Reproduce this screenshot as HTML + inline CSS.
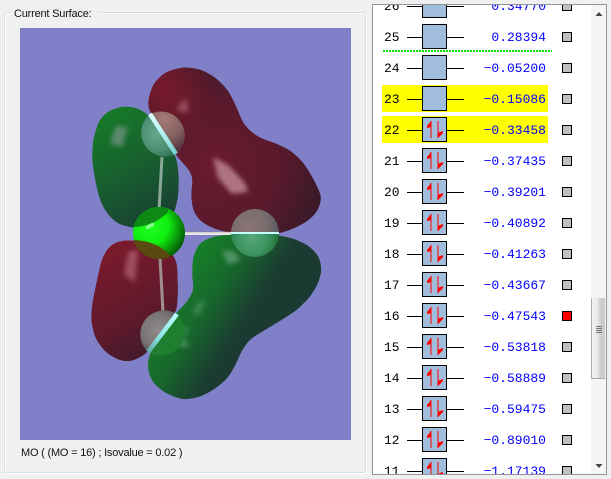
<!DOCTYPE html>
<html>
<head>
<meta charset="utf-8">
<style>
html,body{margin:0;padding:0;width:611px;height:479px;overflow:hidden;background:#f0f0f0}
svg{display:block}
.n{font:13px "Liberation Mono",monospace;fill:#000}
.e{font:13px "Liberation Mono",monospace;fill:#0000ff;text-anchor:end}
.l{font:11px "Liberation Sans",sans-serif;fill:#111;letter-spacing:-.2px}
</style>
</head>
<body>
<svg width="611" height="479" viewBox="0 0 611 479" xmlns="http://www.w3.org/2000/svg">
<defs>
<polygon id="pr1" points="148,100 153,84 165,72 183,67 200,69 215,77 228,90 236,106 243,123 250,131 260,138 275,143 290,150 303,162 313,178 322,197 318,211 308,221 293,229 277,234 255,236 230,233 212,228 200,221 193,211 191,195 193,177 187,167 178,158 160,130 148,108"/>
<polygon id="pg1" points="92,160 93,140 99,120 108,111 123,106 138,108 150,116 170,145 177,160 179,180 178,198 174,214 165,224 150,228 133,228 118,224 108,215 101,203 96,185"/>
<polygon id="pr2" points="123,240 110,245 102,258 97,280 92,305 91,320 95,338 105,352 118,360 130,362 145,355 160,335 177,310 178,290 177,262 170,250 150,242"/>
<polygon id="pg2" points="215,236 200,242 193,256 192,275 194,290 187,302 176,313 160,335 148,358 148,372 153,383 165,393 183,400 200,397 215,389 228,378 236,364 242,350 250,339 265,330 280,321 297,310 310,297 318,284 322,270 319,256 308,245 292,238 270,234 245,233"/>
<radialGradient id="red" gradientUnits="userSpaceOnUse" cx="215" cy="165" r="120">
<stop offset="0" stop-color="#6a1a2e"/><stop offset=".55" stop-color="#581a2c"/><stop offset="1" stop-color="#331a28"/>
</radialGradient>
<radialGradient id="redb" gradientUnits="userSpaceOnUse" cx="165" cy="88" r="50">
<stop offset="0" stop-color="#7c1a2c"/><stop offset="1" stop-color="#7c1a2c" stop-opacity="0"/>
</radialGradient>
<linearGradient id="red2" gradientUnits="userSpaceOnUse" x1="105" y1="250" x2="165" y2="355">
<stop offset="0" stop-color="#7a1a2c"/><stop offset=".6" stop-color="#5f1a2c"/><stop offset="1" stop-color="#3a1a2a"/>
</linearGradient>
<linearGradient id="gr1" gradientUnits="userSpaceOnUse" x1="105" y1="115" x2="170" y2="225">
<stop offset="0" stop-color="#167a28"/><stop offset=".55" stop-color="#185a30"/><stop offset="1" stop-color="#1a3a32"/>
</linearGradient>
<linearGradient id="gr2" gradientUnits="userSpaceOnUse" x1="185" y1="275" x2="255" y2="320">
<stop offset="0" stop-color="#167e28"/><stop offset=".45" stop-color="#17662c"/><stop offset=".9" stop-color="#1b3c32"/><stop offset="1" stop-color="#1b3a32"/>
</linearGradient>
<radialGradient id="cl" gradientUnits="userSpaceOnUse" cx="150" cy="226" r="36">
<stop offset="0" stop-color="#20ff20"/><stop offset=".5" stop-color="#10f010"/><stop offset=".8" stop-color="#0a9a0a"/><stop offset="1" stop-color="#066006"/>
</radialGradient>
<radialGradient id="h1g" gradientUnits="userSpaceOnUse" cx="157" cy="134" r="28">
<stop offset="0" stop-color="#64a88c"/><stop offset=".6" stop-color="#4c8e70"/><stop offset="1" stop-color="#2a6a4c"/>
</radialGradient>
<radialGradient id="h1r" gradientUnits="userSpaceOnUse" cx="164" cy="120" r="32">
<stop offset="0" stop-color="#a47a78"/><stop offset=".6" stop-color="#84605e"/><stop offset="1" stop-color="#583842"/>
</radialGradient>
<radialGradient id="h2g" gradientUnits="userSpaceOnUse" cx="252" cy="238" r="26">
<stop offset="0" stop-color="#56a878"/><stop offset=".6" stop-color="#3e9460"/><stop offset="1" stop-color="#23743c"/>
</radialGradient>
<radialGradient id="h2r" gradientUnits="userSpaceOnUse" cx="248" cy="226" r="32">
<stop offset="0" stop-color="#8a7674"/><stop offset=".6" stop-color="#786c6c"/><stop offset="1" stop-color="#565a62"/>
</radialGradient>
<radialGradient id="h3l" gradientUnits="userSpaceOnUse" cx="158" cy="330" r="28">
<stop offset="0" stop-color="#8e8a8a"/><stop offset=".6" stop-color="#787474"/><stop offset="1" stop-color="#4c4854"/>
</radialGradient>
<linearGradient id="wl1" gradientUnits="userSpaceOnUse" x1="150" y1="114" x2="177" y2="155">
<stop offset="0" stop-color="#e0ffff"/><stop offset=".6" stop-color="#a8ecec"/><stop offset="1" stop-color="#70c8c8"/>
</linearGradient>
<linearGradient id="wl3" gradientUnits="userSpaceOnUse" x1="177" y1="314" x2="148" y2="352">
<stop offset="0" stop-color="#b8ffff"/><stop offset=".6" stop-color="#90e4e4"/><stop offset="1" stop-color="#60a8a8"/>
</linearGradient>
<linearGradient id="thumb" x1="0" x2="1" y1="0" y2="0">
<stop offset="0" stop-color="#f2f2f2"/><stop offset=".5" stop-color="#e6e6e6"/><stop offset=".55" stop-color="#d2d2d2"/><stop offset="1" stop-color="#c8c8c8"/>
</linearGradient>
<filter id="sm" x="-10%" y="-10%" width="120%" height="120%" color-interpolation-filters="sRGB">
<feGaussianBlur stdDeviation="4.5"/>
<feComponentTransfer><feFuncA type="linear" slope="30" intercept="-14.5"/></feComponentTransfer>
</filter>
<filter id="b2" x="-20%" y="-20%" width="140%" height="140%"><feGaussianBlur stdDeviation="2.5"/></filter>
<clipPath id="img"><rect x="20" y="28" width="331" height="412"/></clipPath>
<clipPath id="list"><rect x="374" y="5" width="217" height="469"/></clipPath>
<clipPath id="ccl"><circle cx="159" cy="233" r="26"/></clipPath>
<g id="b"><path d="M407 0.500H422M447 0.500H464" stroke="#000" stroke-width="1" fill="none"/><rect x="422.500" y="-12.500" width="24" height="24" fill="#a0bedc" stroke="#000"/></g>
<g id="a"><path d="M431 -9V8M438 -9V8" stroke="#f00" stroke-width="1" fill="none"/><path d="M431.500 -9.500V-3L427 -2V-4ZM437.500 8.500V3L443 1V3Z" fill="#f00"/></g>
</defs>

<!-- group box -->
<rect x="5.500" y="13.500" width="361" height="460" rx="2" fill="none" stroke="#ffffff"/>
<rect x="4.500" y="12.500" width="361" height="460" rx="2" fill="none" stroke="#d5dfe5"/>
<rect x="11" y="6" width="87" height="12" fill="#f0f0f0"/>
<text class="l" x="14" y="17">Current Surface:</text>

<!-- viewport -->
<rect x="20" y="28" width="331" height="412" fill="#8080c8"/>
<g clip-path="url(#img)">
<g filter="url(#sm)"><use href="#pg1" fill="url(#gr1)"/></g>
<g filter="url(#sm)"><use href="#pr2" fill="url(#red2)"/></g>
<g filter="url(#sm)"><use href="#pr1" fill="url(#red)"/><use href="#pr1" fill="url(#redb)"/></g>
<g filter="url(#sm)"><use href="#pg2" fill="url(#gr2)"/></g>

<!-- highlights -->
<g filter="url(#b2)">
<path d="M116 126L128 127L122 147L110 143Z" fill="#8a9a98" opacity=".6"/>
<path d="M180 103L187 99L189 112L177 111Z" fill="#b06a78" opacity=".6"/>
<path d="M213 157L228 165L245 183L248 192L232 194L218 178Z" fill="#c08a98" opacity=".8"/>
<path d="M128 252L138 250L135 282L124 275Z" fill="#b86878" opacity=".65"/>
<path d="M222 250L235 252L240 260L228 265Z" fill="#6fae88" opacity=".6"/>
<path d="M198 302L206 300L200 314L192 315Z" fill="#5fa078" opacity=".5"/>
<path d="M180 325L190 328L185 338Z" fill="#4f9a70" opacity=".45"/>
<path d="M180 335L190 346L178 347Z" fill="#70b088" opacity=".55"/>
</g>

<!-- bonds -->
<path d="M162 157L159 210" stroke="#8aa89a" stroke-width="3" fill="none"/>
<path d="M160 258L163 312" stroke="#a09090" stroke-width="3" fill="none"/>
<path d="M185 233.500H232" stroke="#e8e8e8" stroke-width="3" fill="none"/>
<path d="M185 232H232" stroke="#8a8a8a" stroke-width="1" fill="none" opacity=".5"/>

<!-- top H -->
<path d="M150 114A24 24 0 0 0 176 154Z" fill="url(#h1g)"/>
<path d="M150 114A24 24 0 0 1 176 154Z" fill="url(#h1r)"/>
<path d="M150 114L176 154" stroke="url(#wl1)" stroke-width="4.500" fill="none"/>
<!-- right H -->
<path d="M231 233A24 24 0 0 1 279 233Z" fill="url(#h2r)"/>
<path d="M231 233A24 24 0 0 0 279 233Z" fill="url(#h2g)"/>
<path d="M231 233H279" stroke="#c8ffff" stroke-width="2"/>
<!-- bottom H -->
<path d="M177 314A24 24 0 0 0 148 352Z" fill="url(#h3l)"/>
<path d="M177 314A24 24 0 0 1 148 352Z" fill="#1f7e30"/>
<path d="M177 314L148 352" stroke="url(#wl3)" stroke-width="4.500" fill="none"/>

<!-- Cl -->
<circle cx="159" cy="233" r="26" fill="url(#cl)"/>
<g clip-path="url(#ccl)">
<path d="M130 205H168L168 212C158 222 148 226 135 227H130Z" fill="#0c8a14"/>
<path d="M130 240C142 240 160 242 172 258L160 262H130Z" fill="#5a4a10"/>
<ellipse cx="150" cy="226" rx="5" ry="2" fill="#a0ffa0" opacity=".8" transform="rotate(-30 150 226)"/>
</g>
</g>

<text class="l" x="21" y="456">MO ( (MO = 16) ; Isovalue = 0.02 )</text>

<!-- list panel -->
<rect x="373" y="5" width="233" height="469" fill="#ffffff"/>
<g clip-path="url(#list)">
<rect x="382" y="85" width="166" height="27" fill="#ffff00"/>
<rect x="382" y="116" width="166" height="27" fill="#ffff00"/>
<path d="M383 51H552" stroke="#00e000" stroke-width="2" stroke-dasharray="2 1" fill="none"/>

<use href="#b" y="6"/><use href="#b" y="37"/><use href="#b" y="68"/><use href="#b" y="99"/>
<use href="#b" y="130"/><use href="#a" y="130"/>
<use href="#b" y="161"/><use href="#a" y="161"/>
<use href="#b" y="192"/><use href="#a" y="192"/>
<use href="#b" y="223"/><use href="#a" y="223"/>
<use href="#b" y="254"/><use href="#a" y="254"/>
<use href="#b" y="285"/><use href="#a" y="285"/>
<use href="#b" y="316"/><use href="#a" y="316"/>
<use href="#b" y="347"/><use href="#a" y="347"/>
<use href="#b" y="378"/><use href="#a" y="378"/>
<use href="#b" y="409"/><use href="#a" y="409"/>
<use href="#b" y="440"/><use href="#a" y="440"/>
<use href="#b" y="471"/><use href="#a" y="471"/>

<text class="n" x="384" y="10">26</text><text class="e" x="546" y="10">0.34770</text>
<text class="n" x="384" y="41">25</text><text class="e" x="546" y="41">0.28394</text>
<text class="n" x="384" y="72">24</text><text class="e" x="546" y="72">−0.05200</text>
<text class="n" x="384" y="103">23</text><text class="e" x="546" y="103">−0.15086</text>
<text class="n" x="384" y="134">22</text><text class="e" x="546" y="134">−0.33458</text>
<text class="n" x="384" y="165">21</text><text class="e" x="546" y="165">−0.37435</text>
<text class="n" x="384" y="196">20</text><text class="e" x="546" y="196">−0.39201</text>
<text class="n" x="384" y="227">19</text><text class="e" x="546" y="227">−0.40892</text>
<text class="n" x="384" y="258">18</text><text class="e" x="546" y="258">−0.41263</text>
<text class="n" x="384" y="289">17</text><text class="e" x="546" y="289">−0.43667</text>
<text class="n" x="384" y="320">16</text><text class="e" x="546" y="320">−0.47543</text>
<text class="n" x="384" y="351">15</text><text class="e" x="546" y="351">−0.53818</text>
<text class="n" x="384" y="382">14</text><text class="e" x="546" y="382">−0.58889</text>
<text class="n" x="384" y="413">13</text><text class="e" x="546" y="413">−0.59475</text>
<text class="n" x="384" y="444">12</text><text class="e" x="546" y="444">−0.89010</text>
<text class="n" x="384" y="475">11</text><text class="e" x="546" y="475">−1.17139</text>

<g fill="#c0c0c0" stroke="#000">
<rect x="562.500" y="1.500" width="9" height="9"/>
<rect x="562.500" y="32.500" width="9" height="9"/>
<rect x="562.500" y="63.500" width="9" height="9"/>
<rect x="562.500" y="94.500" width="9" height="9"/>
<rect x="562.500" y="125.500" width="9" height="9"/>
<rect x="562.500" y="156.500" width="9" height="9"/>
<rect x="562.500" y="187.500" width="9" height="9"/>
<rect x="562.500" y="218.500" width="9" height="9"/>
<rect x="562.500" y="249.500" width="9" height="9"/>
<rect x="562.500" y="280.500" width="9" height="9"/>
<rect x="562.500" y="311.500" width="9" height="9" fill="#ff0000"/>
<rect x="562.500" y="342.500" width="9" height="9"/>
<rect x="562.500" y="373.500" width="9" height="9"/>
<rect x="562.500" y="404.500" width="9" height="9"/>
<rect x="562.500" y="435.500" width="9" height="9"/>
<rect x="562.500" y="466.500" width="9" height="9"/>
</g>
</g>

<!-- scrollbar -->
<rect x="591" y="5" width="15" height="469" fill="#f5f5f5"/>
<rect x="592" y="298" width="13" height="81" fill="url(#thumb)"/>
<path d="M592 378.500H605" stroke="#a8a8a8"/>
<path d="M591.500 298.500V379" stroke="#9a9a9a" fill="none" opacity=".8"/>
<path d="M596 326.500H602M596 328.500H602M596 330.500H602M596 332.500H602" stroke="#777" fill="none"/>
<path d="M595.500 16L599 12L602.500 16Z" fill="#444"/>
<path d="M595.500 464L599 468L602.500 464Z" fill="#444"/>

<!-- panel border -->
<rect x="372.500" y="4.500" width="234" height="470" fill="none" stroke="#8f9498"/>
</svg>
</body>
</html>
